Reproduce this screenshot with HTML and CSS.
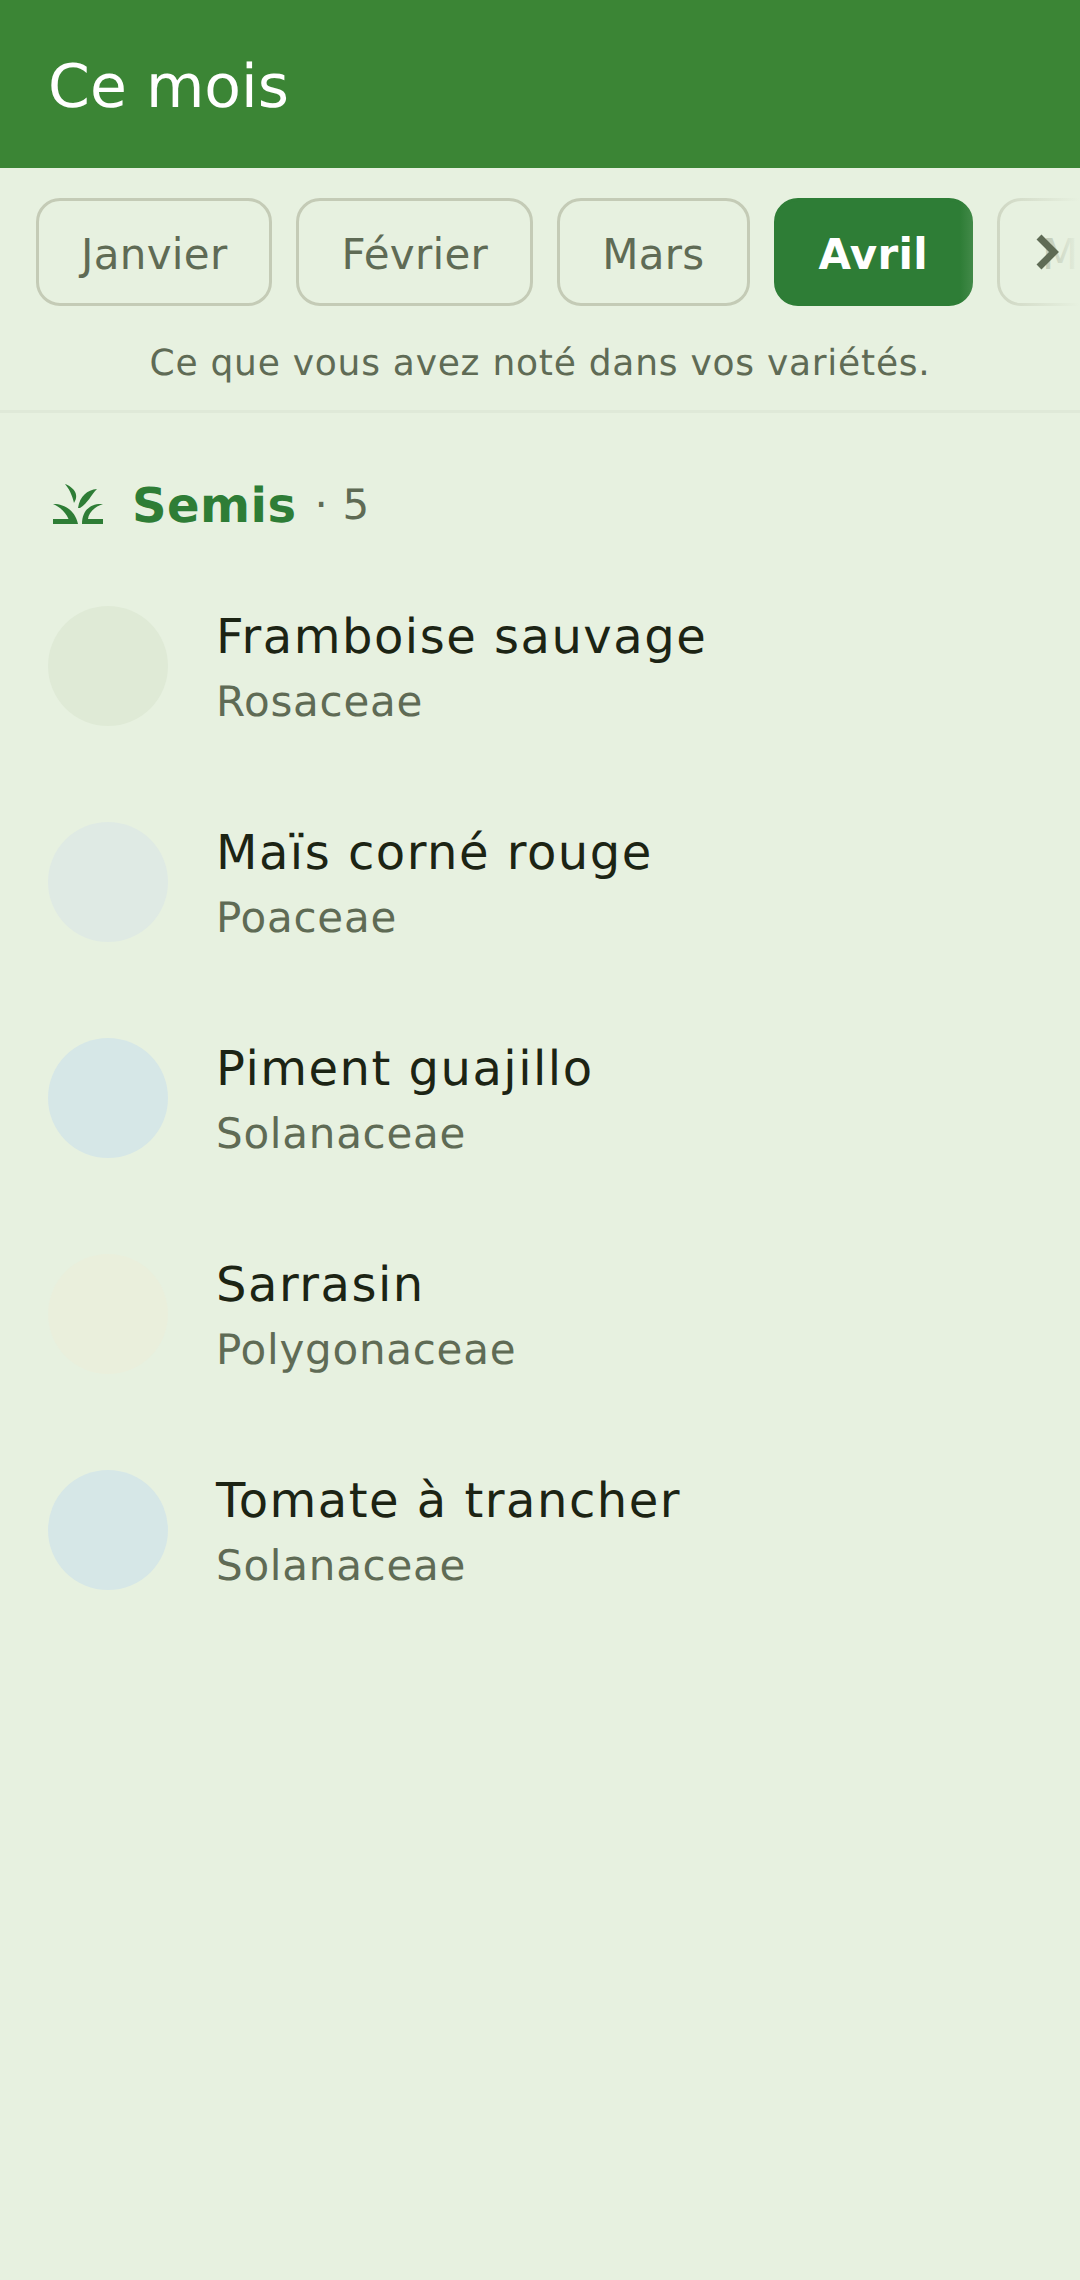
FILE: index.html
```html
<!DOCTYPE html>
<html lang="fr">
<head>
  <meta charset="UTF-8" />
  <meta name="viewport" content="width=device-width, initial-scale=1.0"/>
  <title>Ce mois</title>
  <link rel="stylesheet" href="styles.css">
</head>
<body>
  <header class="topbar">
    <h1>Ce mois</h1>
  </header>

  <div class="months-wrap">
    <div class="months">
      <button class="chip">Janvier</button>
      <button class="chip">Février</button>
      <button class="chip">Mars</button>
      <button class="chip active">Avril</button>
      <button class="chip">Mai</button>
    </div>
    <div class="months-fade"></div>
    <svg class="months-arrow" viewBox="0 0 24 36" width="24" height="36">
      <path d="M3 3 L18 18 L3 33" fill="none" stroke="#5f6b55" stroke-width="7"/>
    </svg>
  </div>

  <p class="hint">Ce que vous avez noté dans vos variétés.</p>

  <main class="content">
    <div class="section-head">
      <svg class="section-icon" viewBox="0 0 50 40" width="50" height="40">
        <path fill="#2e7d36" d="M12 0 C20 3 27 10 21 19 C20 15 18 7 12 0 Z"/>
        <path fill="#2e7d36" d="M44 5 C34 6 27 12 25 24 L27 24 C35 19 38 11 44 5 Z"/>
        <path fill="#2e7d36" d="M0 20 C9 19.5 22 25 25 40 L0 40 L0 35 L15.5 35 C13 29 8 23.5 0 20 Z"/>
        <path fill="#2e7d36" d="M50 20 C39 19 29 25 29 40 L50 40 L50 35 L35 35 C35.5 29 41 23 50 20 Z"/>
      </svg>
      <span class="section-title">Semis</span>
      <span class="section-count">· 5</span>
    </div>

    <div class="plant">
      <div class="dot dot-rosaceae"></div>
      <div>
        <div class="plant-name">Framboise sauvage</div>
        <div class="plant-family">Rosaceae</div>
      </div>
    </div>
    <div class="plant">
      <div class="dot dot-poaceae"></div>
      <div>
        <div class="plant-name">Maïs corné rouge</div>
        <div class="plant-family">Poaceae</div>
      </div>
    </div>
    <div class="plant">
      <div class="dot dot-solanaceae"></div>
      <div>
        <div class="plant-name">Piment guajillo</div>
        <div class="plant-family">Solanaceae</div>
      </div>
    </div>
    <div class="plant">
      <div class="dot dot-polygonaceae"></div>
      <div>
        <div class="plant-name">Sarrasin</div>
        <div class="plant-family">Polygonaceae</div>
      </div>
    </div>
    <div class="plant">
      <div class="dot dot-solanaceae"></div>
      <div>
        <div class="plant-name">Tomate à trancher</div>
        <div class="plant-family">Solanaceae</div>
      </div>
    </div>
  </main>
</body>
</html>
```

FILE: styles.css
```css
body {
  margin: 0;
  height: 2280px;
  background-color: #e7f1e0;
  font-family: 'DejaVu Sans', sans-serif;
  text-rendering: geometricPrecision;
  overflow: hidden;
}

.topbar {
  height: 168px;
  background-color: #3b8535;
  display: flex;
  align-items: center;
  padding: 6px 48px 0;
  box-sizing: border-box;
}

.topbar h1 {
  margin: 0;
  color: #fff;
  font-size: 60px;
  font-weight: 400;
}

.months-wrap {
  position: relative;
  height: 108px;
  padding-top: 30px;
  overflow: hidden;
}

.months {
  display: flex;
  gap: 24px;
  padding: 0 36px;
}

.chip {
  flex: none;
  height: 108px;
  padding: 5px 42px 0;
  background: none;
  border: 3px solid #c4cbb6;
  border-radius: 24px;
  color: #5f6b55;
  font-family: inherit;
  font-size: 42px;
  letter-spacing: 0.3px;
}

.chip.active {
  background-color: #2e7d36;
  border-color: #2e7d36;
  color: #fff;
  font-weight: 700;
}

.months-fade {
  position: absolute;
  top: 0;
  right: 0;
  bottom: 0;
  width: 120px;
  background: linear-gradient(to right, #e7f1e000, #e7f1e0);
}

.months-arrow {
  position: absolute;
  top: 66px;
  right: 20px;
}

.hint {
  margin: 0;
  height: 107px;
  padding-top: 35px;
  box-sizing: border-box;
  border-bottom: 3px solid #dfe9d8;
  color: #5f6b55;
  font-size: 36px;
  line-height: 46px;
  letter-spacing: 0.75px;
  text-align: center;
}

.content {
  padding: 0 48px;
}

.section-head {
  display: flex;
  align-items: center;
  height: 60px;
  margin-top: 61px;
  margin-bottom: 24px;
}

.section-icon {
  margin: 0 29px 0 5px;
}

.section-title {
  padding-top: 4px;
  color: #2e7d36;
  font-size: 48px;
  font-weight: 700;
  letter-spacing: 0.45px;
}

.section-count {
  margin-left: 18px;
  color: #5f6b55;
  font-size: 42px;
  letter-spacing: 0.75px;
}

.plant {
  display: flex;
  align-items: center;
  gap: 48px;
  height: 216px;
}

.dot {
  flex: none;
  width: 120px;
  height: 120px;
  border-radius: 50%;
}

.dot-rosaceae { background-color: #dfead6; }
.dot-poaceae { background-color: #dfeae4; }
.dot-solanaceae { background-color: #d6e7e7; }
.dot-polygonaceae { background-color: #eaefdc; }

.plant-name {
  padding-top: 3px;
  color: #1c2414;
  font-size: 48px;
  line-height: 69px;
  letter-spacing: 1.5px;
}

.plant-family {
  color: #5f6b55;
  font-size: 42px;
  line-height: 60px;
  letter-spacing: 0.75px;
}
```
